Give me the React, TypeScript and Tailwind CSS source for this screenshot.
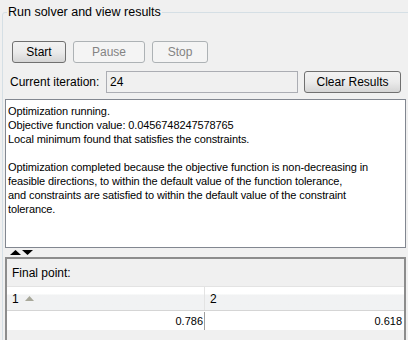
import React from "react";

function Btn({ label, w, disabled }: { label: string; w: string; disabled?: boolean }) {
  return (
    <div
      className={
        "h-[22px] flex items-center justify-center rounded-[3px] border text-[12px] " +
        w +
        " " +
        (disabled
          ? "border-[#adb2b5] bg-[#f4f4f4] text-[#838383]"
          : "border-[#707070] bg-gradient-to-b from-[#f2f2f2] via-[#ebebeb] to-[#d5d5d5] text-black")
      }
    >
      {label}
    </div>
  );
}

export default function App() {
  return (
    <div className="w-[408px] h-[340px] bg-[#f0f0f0] overflow-hidden font-['Liberation_Sans',Arial,sans-serif] text-black">
      <fieldset className="mt-[4px] ml-[2px] w-[412px] h-[340px] border border-[#d5dfe5] rounded-[3px]">
        <legend className="ml-[4px] px-[1px] text-[12.5px] leading-[16px]">Run solver and view results</legend>
        <div className="pl-[9px] pt-[21px] flex gap-[7px]">
          <Btn label="Start" w="w-[54px]" />
          <Btn label="Pause" w="w-[72px]" disabled />
          <Btn label="Stop" w="w-[56px]" disabled />
        </div>
        <div className="pl-[7px] mt-[8px] flex items-center h-[22px]">
          <span className="text-[12px] w-[96px]">Current iteration:</span>
          <div className="w-[192px] h-[22px] border border-[#abadb3] bg-[#f0f0f0] text-[12px] flex items-center pl-[3px]">24</div>
          <div className="ml-[6px]">
            <Btn label="Clear Results" w="w-[97px]" />
          </div>
        </div>
        <div className="ml-[2px] mt-[6px] w-[401px] h-[149px] border border-[#828790] bg-white px-[2px] pt-[4px] text-[11px] leading-[14px] tracking-[-0.1px] whitespace-pre">
          {"Optimization running.\nObjective function value: 0.0456748247578765\nLocal minimum found that satisfies the constraints.\n\nOptimization completed because the objective function is non-decreasing in\nfeasible directions, to within the default value of the function tolerance,\nand constraints are satisfied to within the default value of the constraint\ntolerance."}
        </div>
        <div className="h-[9px] pl-[7px] flex items-center">
          <svg width="24" height="6" viewBox="0 0 24 6">
            <polygon points="0,5 5.5,0 11,5" fill="#000" />
            <polygon points="12,0 23,0 17.5,5" fill="#000" />
          </svg>
        </div>
        <div className="ml-[2px] w-[401px] h-[90px] border-t-2 border-l-2 border-r-2 border-[#8c8c8c] bg-[#f0f0f0]">
          <div className="h-[27px] pl-[5px] flex items-center text-[12px]">Final point:</div>
          <div className="w-[397px] border-t border-[#e3e3e3] bg-white">
            <div className="flex h-[24px] border-b border-[#d5d5d5]">
              <div className="w-[198px] h-full flex items-center pl-[5px] bg-gradient-to-b from-white from-[30%] to-[#f1f2f3] to-[35%] border-r border-[#e3e3e3] text-[12px]">
                <span>1</span>
                <svg className="ml-[6px]" width="9" height="5" viewBox="0 0 9 5">
                  <polygon points="0,5 4.5,0 9,5" fill="#a8a89a" />
                </svg>
              </div>
              <div className="flex-1 h-full flex items-center pl-[5px] bg-gradient-to-b from-white from-[30%] to-[#f1f2f3] to-[35%] text-[12px]">2</div>
            </div>
            <div className="flex h-[18px] mt-[1px] text-[11px]">
              <div className="w-[198px] h-full flex items-center justify-end pr-[1px] border-r border-[#a0a0a0]">0.786</div>
              <div className="flex-1 h-full flex items-center justify-end pr-[2px]">0.618</div>
            </div>
          </div>
        </div>
      </fieldset>
    </div>
  );
}
